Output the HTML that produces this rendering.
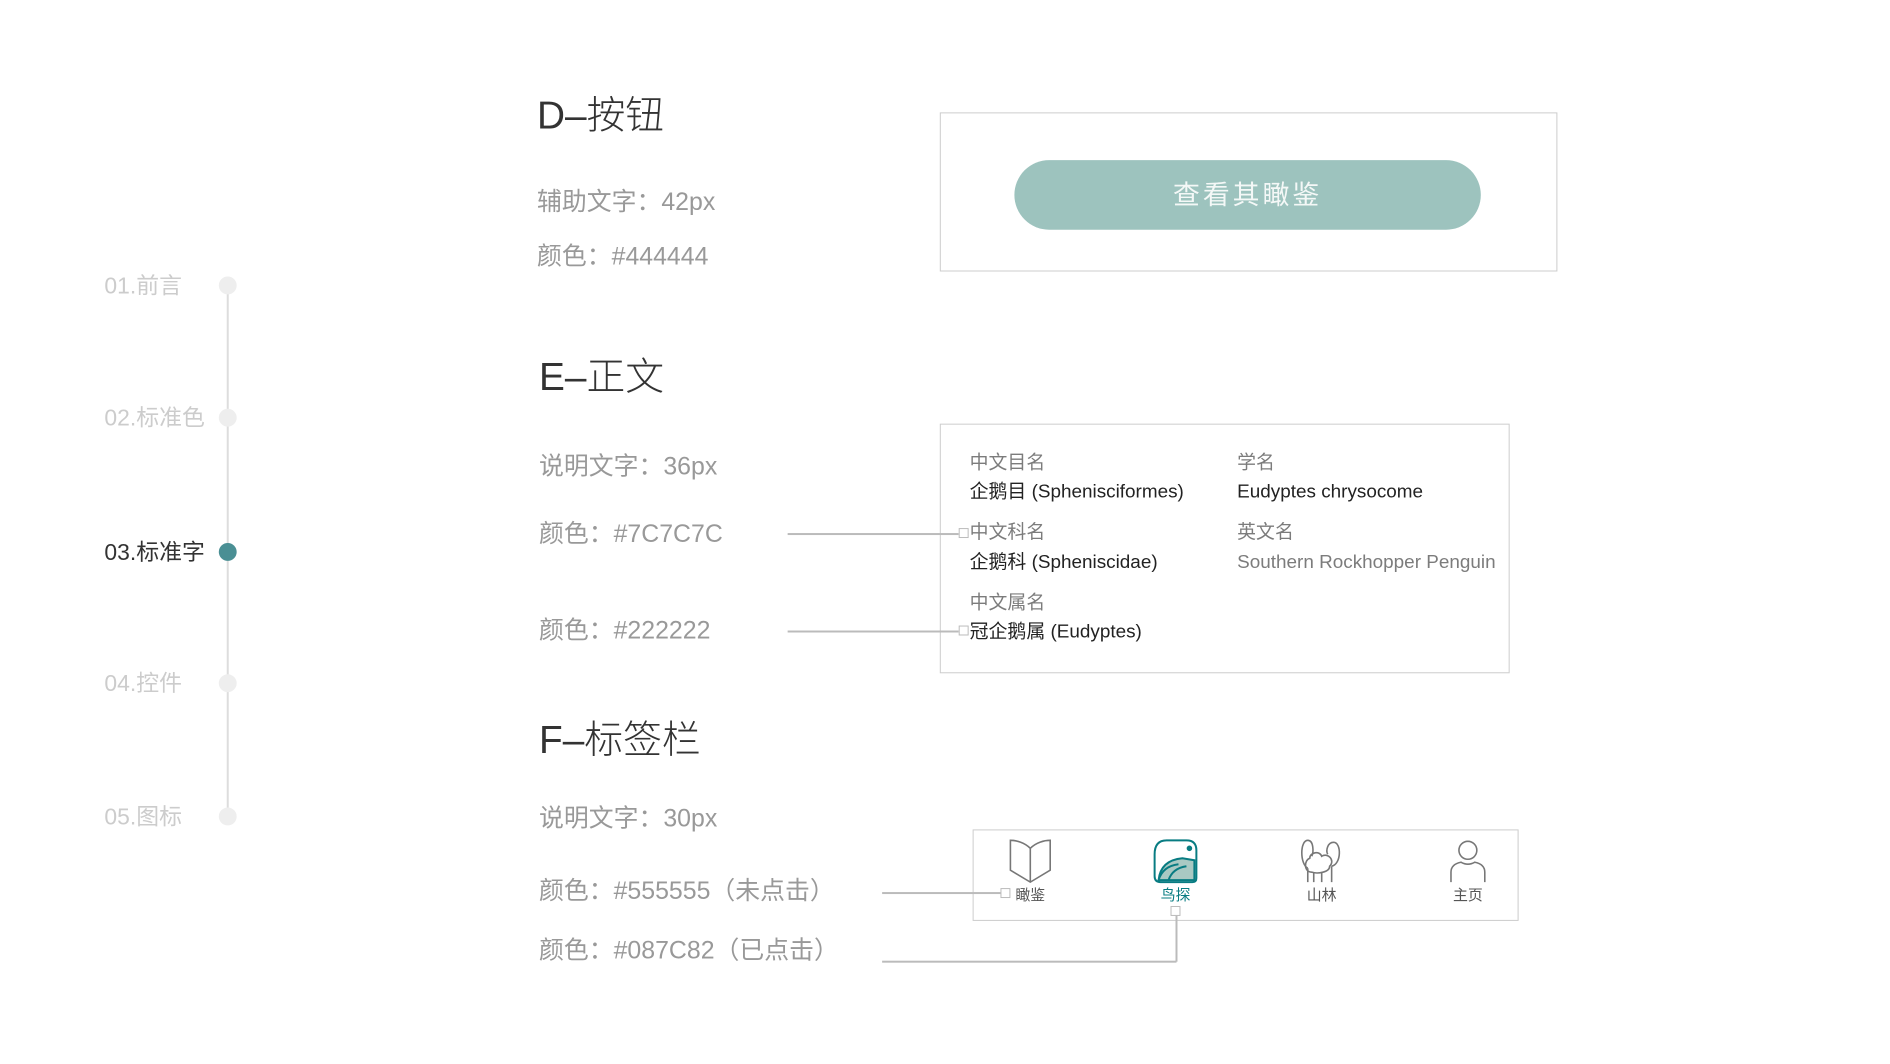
<!DOCTYPE html>
<html><head><meta charset="utf-8"><style>
*{margin:0;padding:0;box-sizing:border-box}
body{width:1890px;height:1064px;background:#fff;position:relative;overflow:hidden;font-family:"Liberation Sans","Noto Sans CJK SC",sans-serif}
#w{position:absolute;left:0;top:0;width:1890px;height:1064px;transform:scale(0.9945);transform-origin:0 0}
.a{position:absolute;white-space:nowrap;line-height:1}
.nav{font-size:23px;color:#ccc;left:105px}
.dot{position:absolute;width:18px;height:18px;border-radius:50%;background:#eee;left:220px}
.h{font-size:39px;color:#333;font-weight:300}
.s{font-size:25px;color:#999}
.box{position:absolute;border:1.5px solid #ccc}
.l{font-size:19px;color:#7c7c7c}
.v{font-size:19px;color:#222}
.ln{position:absolute;background:#bbb}
.sq{position:absolute;width:10px;height:10px;border:1.5px solid #bbb;background:#fff}
.tl{font-size:15px;color:#555;text-align:center;width:80px}
</style></head><body><div id="w">
<div class="ln" style="left:228px;top:287px;width:2px;height:534px;background:#ddd"></div>
<div class="a nav" style="top:276px">01.前言</div><div class="dot" style="top:278px"></div>
<div class="a nav" style="top:409px">02.标准色</div><div class="dot" style="top:411px"></div>
<div class="a nav" style="top:544px;color:#333">03.标准字</div><div class="dot" style="top:546px;background:#4a8f94"></div>
<div class="a nav" style="top:676px">04.控件</div><div class="dot" style="top:678px"></div>
<div class="a nav" style="top:810px">05.图标</div><div class="dot" style="top:812px"></div>

<div class="a h" style="left:540px;top:97px">D–按钮</div>
<div class="a s" style="left:540px;top:191px">辅助文字：42px</div>
<div class="a s" style="left:540px;top:246px">颜色：#444444</div>
<div class="box" style="left:945px;top:113px;width:621px;height:160px"></div>
<div class="a" style="left:1020px;top:161px;width:469px;height:70px;border-radius:35px;background:#9dc3be;color:#f4f8f7;font-size:27px;line-height:70px;text-align:center;letter-spacing:3px">查看其瞰鉴</div>

<div class="a h" style="left:542px;top:360px">E–正文</div>
<div class="a s" style="left:542px;top:457px">说明文字：36px</div>
<div class="a s" style="left:542px;top:525px">颜色：#7C7C7C</div>
<div class="a s" style="left:542px;top:622px">颜色：#222222</div>
<div class="box" style="left:945px;top:426px;width:573px;height:251px"></div>
<div class="ln" style="left:792px;top:536px;width:172px;height:1.5px"></div><div class="sq" style="left:964px;top:531px"></div>
<div class="ln" style="left:792px;top:634px;width:172px;height:1.5px"></div><div class="sq" style="left:964px;top:629px"></div>
<div class="a l" style="left:975px;top:456px">中文目名</div>
<div class="a v" style="left:975px;top:485px">企鹅目 (Sphenisciformes)</div>
<div class="a l" style="left:975px;top:526px">中文科名</div>
<div class="a v" style="left:975px;top:556px">企鹅科 (Spheniscidae)</div>
<div class="a l" style="left:975px;top:597px">中文属名</div>
<div class="a v" style="left:975px;top:626px">冠企鹅属 (Eudyptes)</div>
<div class="a l" style="left:1244px;top:456px">学名</div>
<div class="a v" style="left:1244px;top:485px">Eudyptes chrysocome</div>
<div class="a l" style="left:1244px;top:526px">英文名</div>
<div class="a l" style="left:1244px;top:556px">Southern Rockhopper Penguin</div>

<div class="a h" style="left:542px;top:725px">F–标签栏</div>
<div class="a s" style="left:542px;top:811px">说明文字：30px</div>
<div class="a s" style="left:542px;top:884px">颜色：#555555（未点击）</div>
<div class="a s" style="left:542px;top:944px">颜色：#087C82（已点击）</div>
<div class="box" style="left:978px;top:834px;width:549px;height:92px"></div>
<div class="ln" style="left:887px;top:897px;width:120px;height:1.5px"></div><div class="sq" style="left:1006px;top:893px"></div>
<div class="ln" style="left:887px;top:966px;width:296px;height:1.5px"></div>
<div class="ln" style="left:1182px;top:920px;width:1.5px;height:47px"></div><div class="sq" style="left:1177px;top:911px"></div>

<svg class="a" style="left:1012px;top:843px" width="48" height="46" viewBox="0 0 48 46" fill="none" stroke="#777" stroke-width="1.6">
<path d="M24 10 C18 4 10 2 4 2 V32 L24 44 L44 32 V2 C38 2 30 4 24 10 Z M24 10 V44"/></svg>
<svg class="a" style="left:1159px;top:843px" width="46" height="46" viewBox="0 0 46 46" fill="none" stroke="#087c82" stroke-width="2">
<path d="M14 2 H34 Q44 2 44 12 V40 Q44 44 40 44 H8 Q2 44 2 38 V16 Q2 2 14 2 Z"/>
<circle cx="37" cy="10" r="1.8" fill="#087c82"/>
<path d="M6 42 Q8 22 30 20 L42 22 V42 Z" fill="#a9c9c3"/>
<path d="M6 42 Q10 28 26 26 M16 42 Q20 30 34 28"/></svg>
<svg class="a" style="left:1305px;top:843px" width="48" height="46" viewBox="0 0 48 46" fill="none" stroke="#777" stroke-width="1.6">
<path d="M10 30 C2 26 2 2 10 2 C16 2 16 14 14 18 M34 28 C44 26 44 4 36 4 C30 4 28 12 30 16"/>
<path d="M14 34 C6 34 6 22 12 20 C12 14 22 12 24 18 C30 14 38 22 32 28 C32 34 20 36 14 34 Z"/>
<path d="M10 30 V44 M16 34 V44 M24 34 V44 M34 28 V44"/></svg>
<svg class="a" style="left:1455px;top:843px" width="42" height="46" viewBox="0 0 42 46" fill="none" stroke="#777" stroke-width="1.6">
<circle cx="21" cy="12" r="9"/><path d="M4 44 V34 Q4 26 14 24 Q21 28 28 24 Q38 26 38 34 V44"/></svg>
<div class="a tl" style="left:996px;top:893px">瞰鉴</div>
<div class="a tl" style="left:1142px;top:893px;color:#087c82">鸟探</div>
<div class="a tl" style="left:1289px;top:893px">山林</div>
<div class="a tl" style="left:1436px;top:893px">主页</div>
</div></body></html>
